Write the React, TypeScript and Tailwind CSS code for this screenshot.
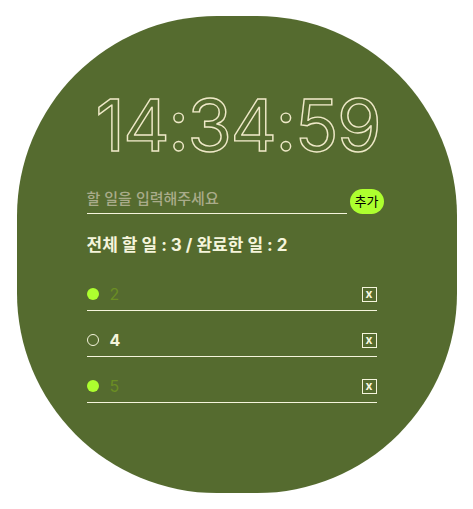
import React from "react";

const items = [
  { text: "2", done: true },
  { text: "4", done: false },
  { text: "5", done: true },
];

export default function App() {
  return (
    <div className="w-full bg-white pt-4" style={{ fontFamily: "Inter, 'Noto Sans CJK KR', sans-serif" }}>
      <div className="mx-auto w-[440px] h-[477px] rounded-[200px] bg-[#556B2F] flex flex-col">
        <div
          className="mt-[73px] ml-[79px] text-[72px] leading-none tracking-[-1.5px] text-transparent [-webkit-text-stroke:1.4px_#efe9c8]"
          style={{ fontFamily: "Inter, sans-serif" }}
        >
          14:34:59
        </div>
        <div className="ml-[70px] w-[297px] mt-[27px] flex items-end">
          <div className="w-[260px] border-b border-[#F5F5DC] pb-[3px] text-[15px] text-[#a9ab8a] font-medium leading-[22px]">
            할 일을 입력해주세요
          </div>
          <button className="ml-[3px] w-[34px] h-[25px] rounded-full bg-[#ADFF2F] text-[13px] text-black flex items-center justify-center">
            추가
          </button>
        </div>
        <div className="ml-[70px] mt-[18px] text-[17px] leading-[26px] font-bold text-[#F5F5DC]">
          전체 할 일 : 3 / 완료한 일 : 2
        </div>
        <div className="ml-[70px] w-[290px] mt-[20px] flex flex-col gap-[13px]">
          {items.map((it, i) => (
            <div key={i} className="flex items-center h-[33px] border-b border-[#F5F5DC]">
              {it.done ? (
                <span className="w-[12px] h-[12px] rounded-full bg-[#ADFF2F]" />
              ) : (
                <span className="w-[12px] h-[12px] rounded-full border border-[#F5F5DC]" />
              )}
              <span
                className={
                  "ml-[11px] text-[16px] " +
                  (it.done ? "text-[#6B8E23] font-normal" : "text-[#F5F5DC] font-bold")
                }
              >
                {it.text}
              </span>
              <span className="ml-auto w-[15px] h-[15px] border border-[#F5F5DC] text-[#F5F5DC] text-[12px] font-bold leading-none flex items-center justify-center pb-[1px]">
                x
              </span>
            </div>
          ))}
        </div>
      </div>
      <div className="h-4" />
    </div>
  );
}
